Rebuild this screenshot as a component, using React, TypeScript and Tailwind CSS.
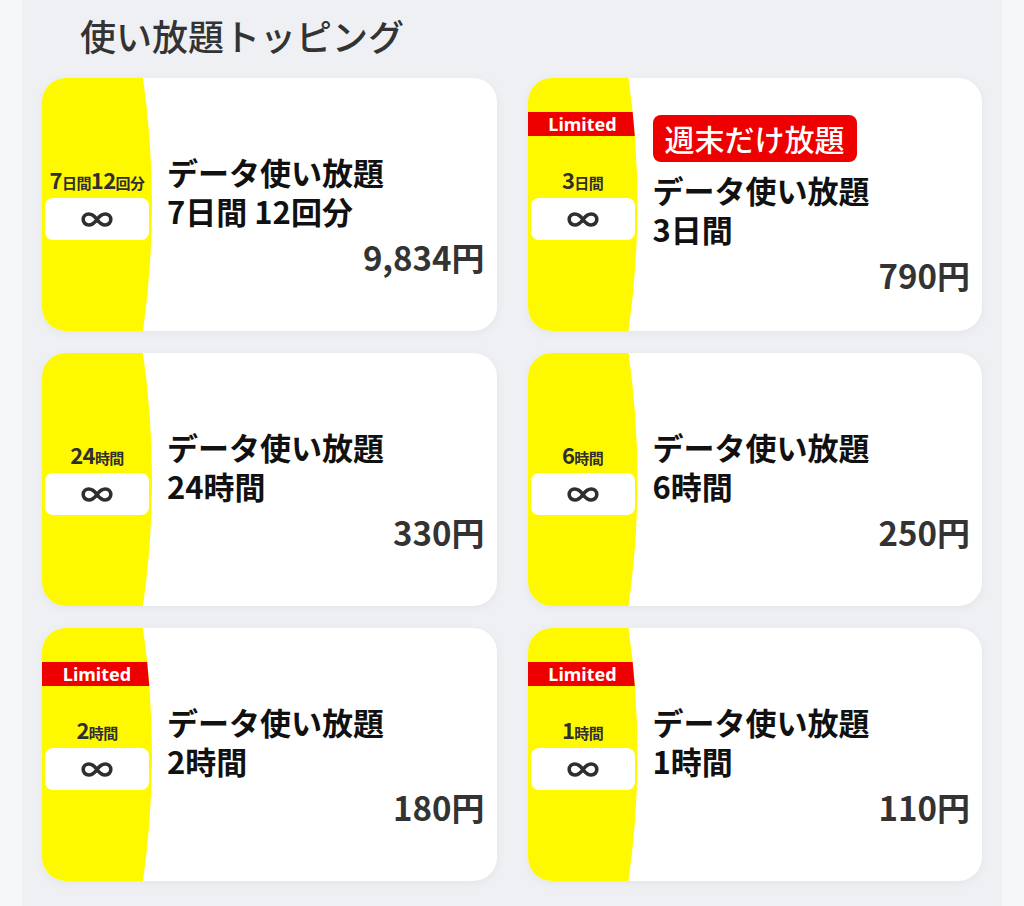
import React from "react";

type Plan = {
  label: [string, string][];
  sub: string;
  price: string;
  limited?: boolean;
  tag?: string;
};

const plans: Plan[] = [
  { label: [["7", "日間"], ["12", "回分"]], sub: "7日間 12回分", price: "9,834円" },
  { label: [["3", "日間"]], sub: "3日間", price: "790円", limited: true, tag: "週末だけ放題" },
  { label: [["24", "時間"]], sub: "24時間", price: "330円" },
  { label: [["6", "時間"]], sub: "6時間", price: "250円" },
  { label: [["2", "時間"]], sub: "2時間", price: "180円", limited: true },
  { label: [["1", "時間"]], sub: "1時間", price: "110円", limited: true },
];

const Infinity8 = () => (
  <svg width="32" height="15" viewBox="0 0 32 15" fill="none">
    <path
      d="M16 7.5C13 3.2 10.4 2 7.7 2a5.5 5.5 0 0 0 0 11c2.7 0 5.3-1.2 8.3-5.5C19 3.2 21.6 2 24.3 2a5.5 5.5 0 0 1 0 11c-2.7 0-5.3-1.2-8.3-5.5Z"
      stroke="#2f2f2f"
      strokeWidth="3.6"
      strokeLinejoin="round"
    />
  </svg>
);

const Card = ({ plan }: { plan: Plan }) => {
  return (
    <div className="h-[253px] rounded-[24px] bg-white overflow-hidden flex shadow-[0_2px_10px_rgba(0,0,0,0.05)]">
      <div className="relative w-[110px] shrink-0 bg-[#fff900] [clip-path:path('M0_0H101Q119_126.5_101_253H0Z')] flex flex-col items-center justify-center pt-1">
        {plan.limited && (
          <div className="absolute top-[34px] left-0 w-full h-[24px] bg-[#ee0000] text-white text-[18px] font-bold leading-[24px] text-center font-['Noto_Sans',sans-serif]">
            Limited
          </div>
        )}
        <div className="h-[20px] flex items-end text-[#2f2f2f] font-bold tracking-[-0.6px] mb-[5px]">
          {plan.label.map(([num, unit], i) => (
            <span key={i} className="flex items-baseline">
              <span className="text-[22px] leading-[20px]">{num}</span>
              <span className="text-[15px] leading-[20px]">{unit}</span>
            </span>
          ))}
        </div>
        <div className="w-[104px] h-[42px] rounded-[8px] bg-white flex items-center justify-center">
          <Infinity8 />
        </div>
      </div>
      <div className={plan.tag ? "flex-1 flex flex-col justify-center pl-[15px] pr-[12px]" : "flex-1 flex flex-col justify-center pl-[15px] pr-[12px] pt-5"}>
        {plan.tag && (
          <div className="self-start bg-[#ee0000] rounded-[8px] px-[12px] h-[47px] leading-[47px] text-white text-[30px] font-medium mb-2">
            {plan.tag}
          </div>
        )}
        <div className="text-[#111] text-[31px] font-semibold leading-[39px]">
          <div>データ使い放題</div>
          <div>{plan.sub}</div>
        </div>
        <div className="mt-2 text-right text-[#333] text-[33px] font-semibold leading-[39px]">
          {plan.price}
        </div>
      </div>
    </div>
  );
};

export default function App() {
  return (
    <div className="min-h-[906px] w-full bg-[#f6f7f9] px-[22px] font-['Noto_Sans_CJK_JP','Noto_Sans',sans-serif]">
      <div className="w-[980px] min-h-[906px] bg-[#eef0f4] px-5 pt-[13px] pb-6">
        <h1 className="ml-[38px] text-[36px] font-medium leading-[45px] text-[#333] mb-5">
          使い放題トッピング
        </h1>
        <div className="grid grid-cols-2 gap-x-[31px] gap-y-[22px]">
          {plans.map((p, i) => (
            <Card key={i} plan={p} />
          ))}
        </div>
      </div>
    </div>
  );
}
